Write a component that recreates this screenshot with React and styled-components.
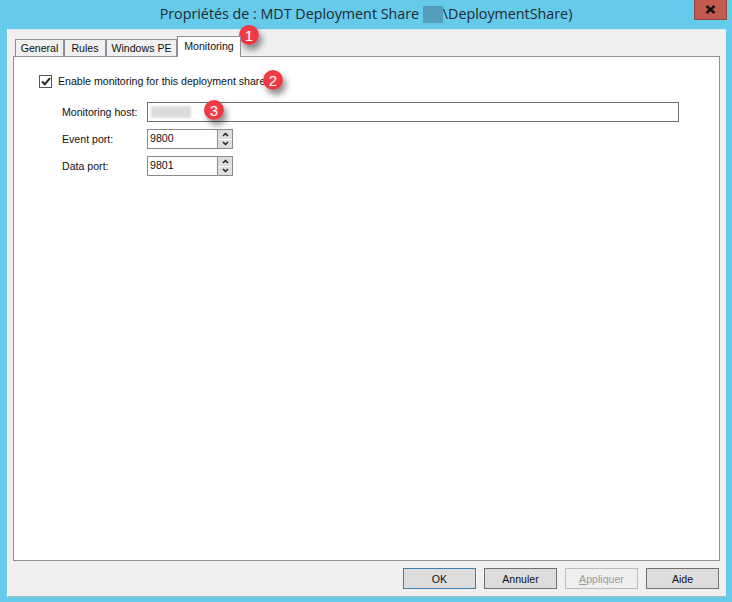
import React from 'react'
import styled, { createGlobalStyle } from 'styled-components'

const GlobalStyle = createGlobalStyle`
  html, body {
    margin: 0;
    padding: 0;
    background: #66caeb;
  }
  * {
    box-sizing: border-box;
  }
`

const tabs = [
  { label: 'General', width: 49 },
  { label: 'Rules', width: 42 },
  { label: 'Windows PE', width: 71 },
  { label: 'Monitoring', width: 64, active: true },
]

const buttons = [
  { label: 'OK', isDefault: true },
  { label: 'Annuler' },
  { label: 'Appliquer', disabled: true },
  { label: 'Aide' },
]

const badges = [
  { n: 1, x: 249, y: 35 },
  { n: 2, x: 273, y: 80 },
  { n: 3, x: 214, y: 110 },
]

const Chevron = ({ up }) => (
  <svg width='7' height='5' viewBox='0 0 7 5'>
    <path d={up ? 'M1 4L3.5 1.5L6 4' : 'M1 1L3.5 3.5L6 1'} fill='none' stroke='#222' strokeWidth='1.5' />
  </svg>
)

const Spinner = () => (
  <SpinBox>
    <SpinButton><Chevron up /></SpinButton>
    <SpinButton><Chevron /></SpinButton>
  </SpinBox>
)

const App = () => {
  return (
    <Window>
      <GlobalStyle />
      <TitleBar>
        <Title>
          Propriétés de : MDT Deployment Share <TitleBlur />\DeploymentShare)
        </Title>
        <CloseButton>
          <svg width='11' height='9' viewBox='0 0 11 9'>
            <path d='M1.5 1L9.5 8M9.5 1L1.5 8' stroke='#111' strokeWidth='2.4' fill='none' />
          </svg>
        </CloseButton>
      </TitleBar>
      <Client>
        <TabStrip>
          {tabs.map(t => (
            <Tab key={t.label} $active={t.active} $width={t.width}>{t.label}</Tab>
          ))}
        </TabStrip>
        <Panel>
          <CheckRow>
            <CheckBox>
              <svg width='10' height='9' viewBox='0 0 10 9'>
                <path d='M1 4.5L3.8 7.3L9 1.2' fill='none' stroke='#222' strokeWidth='2' />
              </svg>
            </CheckBox>
            <CheckLabel>Enable monitoring for this deployment share</CheckLabel>
          </CheckRow>
          <Form>
            <Label>Monitoring host:</Label>
            <HostInput><HostBlur /></HostInput>
            <Label>Event port:</Label>
            <PortField>
              <PortInput>9800</PortInput>
              <Spinner />
            </PortField>
            <Label>Data port:</Label>
            <PortField>
              <PortInput>9801</PortInput>
              <Spinner />
            </PortField>
          </Form>
        </Panel>
        <ButtonRow>
          {buttons.map(b => (
            <DialogButton key={b.label} $default={b.isDefault} $disabled={b.disabled}>
              {b.label === 'Appliquer' ? <><u>A</u>ppliquer</> : b.label}
            </DialogButton>
          ))}
        </ButtonRow>
      </Client>
      {badges.map(b => (
        <Badge key={b.n} $x={b.x} $y={b.y}>{b.n}</Badge>
      ))}
    </Window>
  )
}

const Window = styled.div`
  position: relative;
  width: 732px;
  height: 602px;
  display: flex;
  flex-direction: column;
  padding: 0 6px 5px 7px;
  background: #66caeb;
  font-family: 'Liberation Sans', Arial, sans-serif;
  overflow: hidden;
`

const TitleBar = styled.div`
  height: 29px;
  flex: none;
  display: grid;
  grid-template-columns: 1fr auto 1fr;
  align-items: start;
  margin: 0 -1px 0 -2px;
`

const Title = styled.div`
  grid-column: 2;
  padding-top: 4px;
  font-family: 'Open Sans', sans-serif;
  font-size: 14.3px;
  line-height: 20px;
  color: #1c2a30;
  white-space: nowrap;
`

const TitleBlur = styled.span`
  display: inline-block;
  width: 20px;
  height: 17px;
  vertical-align: -4px;
  background: #549ebb;
`

const CloseButton = styled.div`
  grid-column: 3;
  justify-self: end;
  width: 33px;
  height: 20px;
  display: flex;
  align-items: center;
  justify-content: center;
  background: #c35a50;
  border: 1px solid #8a4a44;
  border-top: 0;
`

const Client = styled.div`
  flex: 1;
  display: flex;
  flex-direction: column;
  padding: 7px 5px 7px 5px;
  background: #f0f0f0;
  border-left: 1px solid #fff;
  border-right: 1px solid #e4f1f6;
  border-top: 1px solid #d8ecf3;
  border-bottom: 1px solid #a9bcc4;
`

const TabStrip = styled.div`
  display: flex;
  align-items: flex-end;
  height: 20px;
  padding-left: 2px;
  position: relative;
  z-index: 1;
  margin-bottom: -1px;
`

const Tab = styled.div`
  width: ${p => p.$width}px;
  height: ${p => (p.$active ? 21 : 18)}px;
  display: flex;
  align-items: center;
  justify-content: center;
  font-size: 10.6px;
  color: #111;
  background: ${p => (p.$active ? '#fff' : '#f0f0f0')};
  border: 1px solid #8f8f9a;
  border-bottom: ${p => (p.$active ? '0' : '1px solid #8f8f9a')};
  padding-bottom: ${p => (p.$active ? 2 : 1)}px;
`

const Panel = styled.div`
  flex: 1;
  background: #fff;
  border: 1px solid #8f8f9a;
  padding: 18px 40px 0 25px;
`

const CheckRow = styled.div`
  display: flex;
  align-items: center;
  gap: 6px;
  height: 13px;
`

const CheckBox = styled.div`
  width: 13px;
  height: 13px;
  display: flex;
  align-items: center;
  justify-content: center;
  background: #fff;
  border: 1px solid #555;
`

const Label = styled.span`
  font-size: 10.6px;
  color: #111;
  white-space: nowrap;
  padding-bottom: 1px;
`

const CheckLabel = styled(Label)`
  padding-bottom: 2px;
`

const Form = styled.div`
  display: grid;
  grid-template-columns: 85px 1fr;
  grid-auto-rows: 20px;
  row-gap: 7px;
  align-items: center;
  margin-top: 14px;
  padding-left: 23px;
`

const HostInput = styled.div`
  height: 20px;
  display: flex;
  align-items: center;
  padding-left: 3px;
  background: #fff;
  border: 1px solid #6f6f6f;
`

const HostBlur = styled.div`
  width: 40px;
  height: 12px;
  background: #dcdcdc;
  filter: blur(1px);
`

const PortField = styled.div`
  display: flex;
  width: 86px;
  height: 20px;
`

const PortInput = styled.div`
  width: 70px;
  display: flex;
  align-items: center;
  padding: 0 0 2px 2px;
  font-size: 10.6px;
  color: #111;
  background: #fff;
  border: 1px solid #8a8a8a;
  border-right: 0;
`

const SpinBox = styled.div`
  width: 16px;
  display: flex;
  flex-direction: column;
  gap: 1px;
  background: #fff;
  border: 1px solid #8a8a8a;
`

const SpinButton = styled.div`
  flex: 1;
  display: flex;
  align-items: center;
  justify-content: center;
  background: #dedede;
`

const ButtonRow = styled.div`
  display: flex;
  justify-content: flex-end;
  gap: 8px;
  padding: 7px 1px 0 0;
`

const DialogButton = styled.div`
  width: 73px;
  height: 21px;
  display: flex;
  align-items: center;
  justify-content: center;
  font-size: 10.6px;
  color: ${p => (p.$disabled ? '#9a9a9a' : '#111')};
  background: ${p => (p.$disabled ? '#efefef' : '#dddddd')};
  border: 1px solid ${p => (p.$default ? '#3c7fb1' : p.$disabled ? '#bcbcbc' : '#707070')};
`

const Badge = styled.div`
  position: absolute;
  left: ${p => p.$x - 10}px;
  top: ${p => p.$y - 10}px;
  width: 20px;
  height: 20px;
  display: flex;
  align-items: center;
  justify-content: center;
  border-radius: 50%;
  background: radial-gradient(circle at 45% 40%, #f4424a, #e5303a);
  color: #fff;
  font-size: 15px;
  box-shadow: 3px 5px 6px rgba(0, 0, 0, 0.45);
`

export default App
